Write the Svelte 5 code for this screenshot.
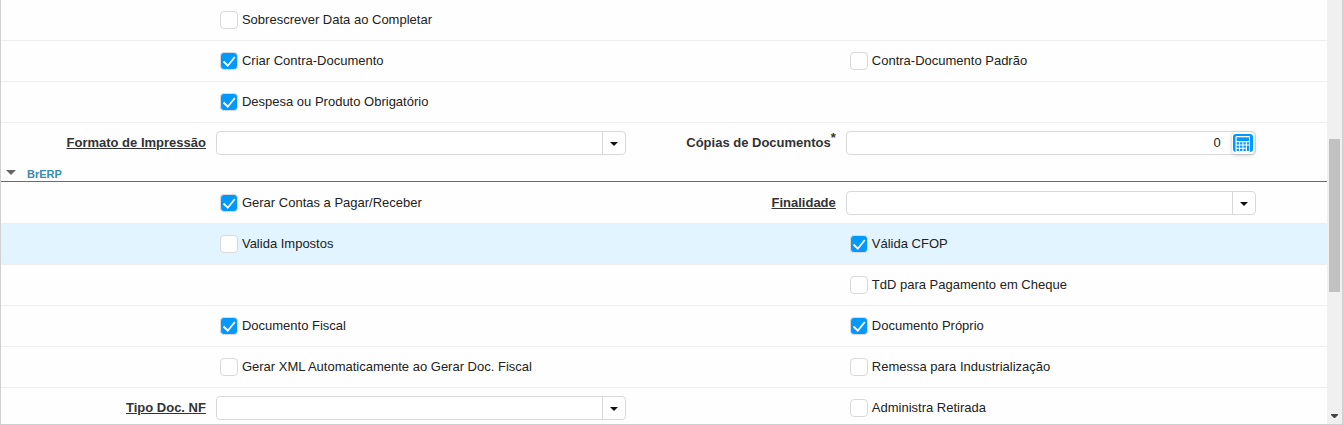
<script>
  const rows = [
    [{ type: 'check', label: 'Sobrescrever Data ao Completar' }],
    [
      { type: 'check', label: 'Criar Contra-Documento', checked: true },
      { type: 'check', label: 'Contra-Documento Padrão' }
    ],
    [{ type: 'check', label: 'Despesa ou Produto Obrigatório', checked: true }],
    [
      { type: 'combo', label: 'Formato de Impressão' },
      { type: 'number', label: 'Cópias de Documentos', required: true, value: '0' }
    ]
  ];

  const brerpRows = [
    [
      { type: 'check', label: 'Gerar Contas a Pagar/Receber', checked: true },
      { type: 'combo', label: 'Finalidade' }
    ],
    [
      { type: 'check', label: 'Valida Impostos' },
      { type: 'check', label: 'Válida CFOP', checked: true }
    ],
    [null, { type: 'check', label: 'TdD para Pagamento em Cheque' }],
    [
      { type: 'check', label: 'Documento Fiscal', checked: true },
      { type: 'check', label: 'Documento Próprio', checked: true }
    ],
    [
      { type: 'check', label: 'Gerar XML Automaticamente ao Gerar Doc. Fiscal' },
      { type: 'check', label: 'Remessa para Industrialização' }
    ],
    [
      { type: 'combo', label: 'Tipo Doc. NF' },
      { type: 'check', label: 'Administra Retirada' }
    ]
  ];

  let open = $state(true);
  let active = $state('Valida Impostos');

  function fieldId(field) {
    return field.label.toLowerCase().replace(/[^a-z]+/g, '-');
  }
</script>

{#snippet cell(field)}
  <div class="label">
    {#if field && field.type !== 'check'}
      <label for={fieldId(field)} class:link={field.type === 'combo'}>{field.label}</label>{#if field.required}<sup>*</sup>{/if}
    {/if}
  </div>
  <div class="field">
    {#if field?.type === 'check'}
      <label class="check">
        <input type="checkbox" checked={field.checked} onfocus={() => (active = field.label)} />
        <span>{field.label}</span>
      </label>
    {:else if field?.type === 'combo'}
      <div class="box">
        <input id={fieldId(field)} type="text" autocomplete="off" />
        <button type="button" class="drop" aria-label="Abrir lista">
          <svg width="8" height="4" viewBox="0 0 8 4"><path d="M0 0h8L4 4z" fill="#111" /></svg>
        </button>
      </div>
    {:else if field?.type === 'number'}
      <div class="box">
        <input id={fieldId(field)} class="number" type="text" value={field.value} />
        <button type="button" class="calc" aria-label="Calculadora">
          <svg width="20" height="18" viewBox="0 0 20 18">
            <path d="M3 0h14a3 3 0 0 1 3 3v12a3 3 0 0 1-3 3H3a3 3 0 0 1-3-3V3a3 3 0 0 1 3-3z" fill="#0099ff" />
            <path d="M3.5 2h12.5a1 1 0 0 1 1 1v15H2.500V3a1 1 0 0 1 1-1z" fill="#fff" />
            <path d="M3.700 3.300h12.300v3.700H3.700z" fill="#0099ff" />
            <path
              d="M3.700 8.300h2.300v2.200H3.700zM7.100 8.300h2.300v2.200H7.100zM10.500 8.300h2.300v2.200h-2.300zM13.900 8.300h2.300v2.200h-2.300zM3.700 11.600h2.300v2.200H3.700zM7.100 11.600h2.300v2.200H7.100zM10.500 11.600h2.300v2.200h-2.300zM13.900 11.600h2.300v5.400h-2.300zM3.700 14.800h2.300v2.200H3.700zM7.100 14.800h2.300v2.200H7.100zM10.500 14.800h2.300v2.200h-2.300z"
              fill="#0099ff"
            />
          </svg>
        </button>
      </div>
    {/if}
  </div>
{/snippet}

{#snippet formRow(row)}
  <div class="row" class:active={row.some((f) => f?.label === active)}>
    {@render cell(row[0])}
    {@render cell(row[1])}
  </div>
{/snippet}

<div class="panel">
  <form class="form" onsubmit={(e) => e.preventDefault()}>
    {#each rows as row}
      {@render formRow(row)}
    {/each}

    <button type="button" class="group" aria-expanded={open} onclick={() => (open = !open)}>
      <svg class:closed={!open} width="10" height="5" viewBox="0 0 10 5"><path d="M0 0h10L5 5z" fill="#666" /></svg>
      <span>BrERP</span>
    </button>

    {#if open}
      {#each brerpRows as row}
        {@render formRow(row)}
      {/each}
    {/if}
  </form>

  <div class="scrollbar">
    <div class="track">
      <div class="thumb"></div>
    </div>
    <svg width="7" height="4" viewBox="0 0 7 4"><path d="M0 0h7v1L4 4H3L0 1z" fill="#444" /></svg>
  </div>
</div>

<style>
  :global(body) {
    margin: 0;
    background: #fefefe;
  }

  .panel {
    display: flex;
    height: 100vh;
    box-sizing: border-box;
    overflow: hidden;
    border: 1px solid #d0d0d0;
    border-top: none;
    font-family: 'Liberation Sans', Arial, sans-serif;
    font-size: 13px;
    color: #333;
  }

  .form {
    flex: 1;
    min-width: 0;
    overflow: hidden;
  }

  .row {
    display: grid;
    grid-template-columns: 19fr 38fr 19fr 38fr 6fr;
    align-items: center;
    height: 41px;
    box-sizing: border-box;
    border-bottom: 1px solid #efefef;
  }
  .row.active {
    background: #e1f4ff;
  }
  .row:has(+ .group) {
    border-bottom-color: transparent;
  }

  .label {
    padding: 0 5px 2px 0;
    text-align: right;
    font-weight: bold;
    white-space: nowrap;
  }
  .link {
    text-decoration: underline;
    cursor: pointer;
  }
  sup {
    font-size: 13px;
    line-height: 0;
  }

  .field {
    min-width: 0;
    padding: 0 5px;
  }

  .check {
    display: flex;
    align-items: center;
    gap: 4px;
    margin-left: 4px;
    color: #222;
    white-space: nowrap;
  }
  .check span {
    padding-bottom: 2px;
  }
  .check input {
    appearance: none;
    width: 18px;
    height: 18px;
    margin: 0;
    border: 1px solid #d9d9d9;
    border-radius: 4px;
    background: #fff;
  }
  .check input:checked {
    background: #0099ff
      url("data:image/svg+xml,%3Csvg xmlns='http://www.w3.org/2000/svg' viewBox='0 0 16 16'%3E%3Cpath d='M2.5 8.500l4.300 4.200 7-8.700' fill='none' stroke='%23fff' stroke-width='1.800'/%3E%3C/svg%3E")
      center / 16px 16px no-repeat;
  }

  .box {
    display: flex;
    height: 24px;
    box-sizing: border-box;
    border: 1px solid #d9d9d9;
    border-radius: 4px;
    background: #fff;
  }
  .box input {
    flex: 1;
    min-width: 0;
    padding: 0 5px 2px;
    border: none;
    outline: none;
    background: none;
    font: inherit;
    color: #222;
  }
  .box .number {
    padding-right: 11px;
    text-align: right;
  }

  button {
    display: flex;
    align-items: center;
    padding: 0;
    border: none;
    background: none;
    font: inherit;
    cursor: pointer;
  }
  .drop {
    justify-content: center;
    width: 23px;
    border-left: 1px solid #d9d9d9;
  }
  .drop svg {
    margin-top: 2px;
  }
  .calc {
    justify-content: center;
    width: 22px;
    margin-right: 1px;
    border-radius: 4px;
    box-shadow: 0 1px 4px rgba(0, 0, 0, 0.2);
  }

  .group {
    width: 100%;
    height: 18px;
    gap: 11px;
    margin-bottom: 1px;
    padding: 2px 0 0 5px;
    border-bottom: 1px solid #3b7ba3;
    font-size: 11px;
    font-weight: bold;
    color: #3b8ab0;
  }
  .group svg {
    margin-bottom: 2px;
  }
  .closed {
    transform: rotate(-90deg);
  }

  .scrollbar {
    display: flex;
    flex-direction: column;
    align-items: center;
    width: 15px;
    padding-bottom: 6px;
    box-sizing: border-box;
    background: #f0f0f0;
  }
  .track {
    flex: 1;
    width: 11px;
  }
  .thumb {
    height: 37%;
    margin-top: 139px;
    background: #c1c1c1;
  }
</style>
